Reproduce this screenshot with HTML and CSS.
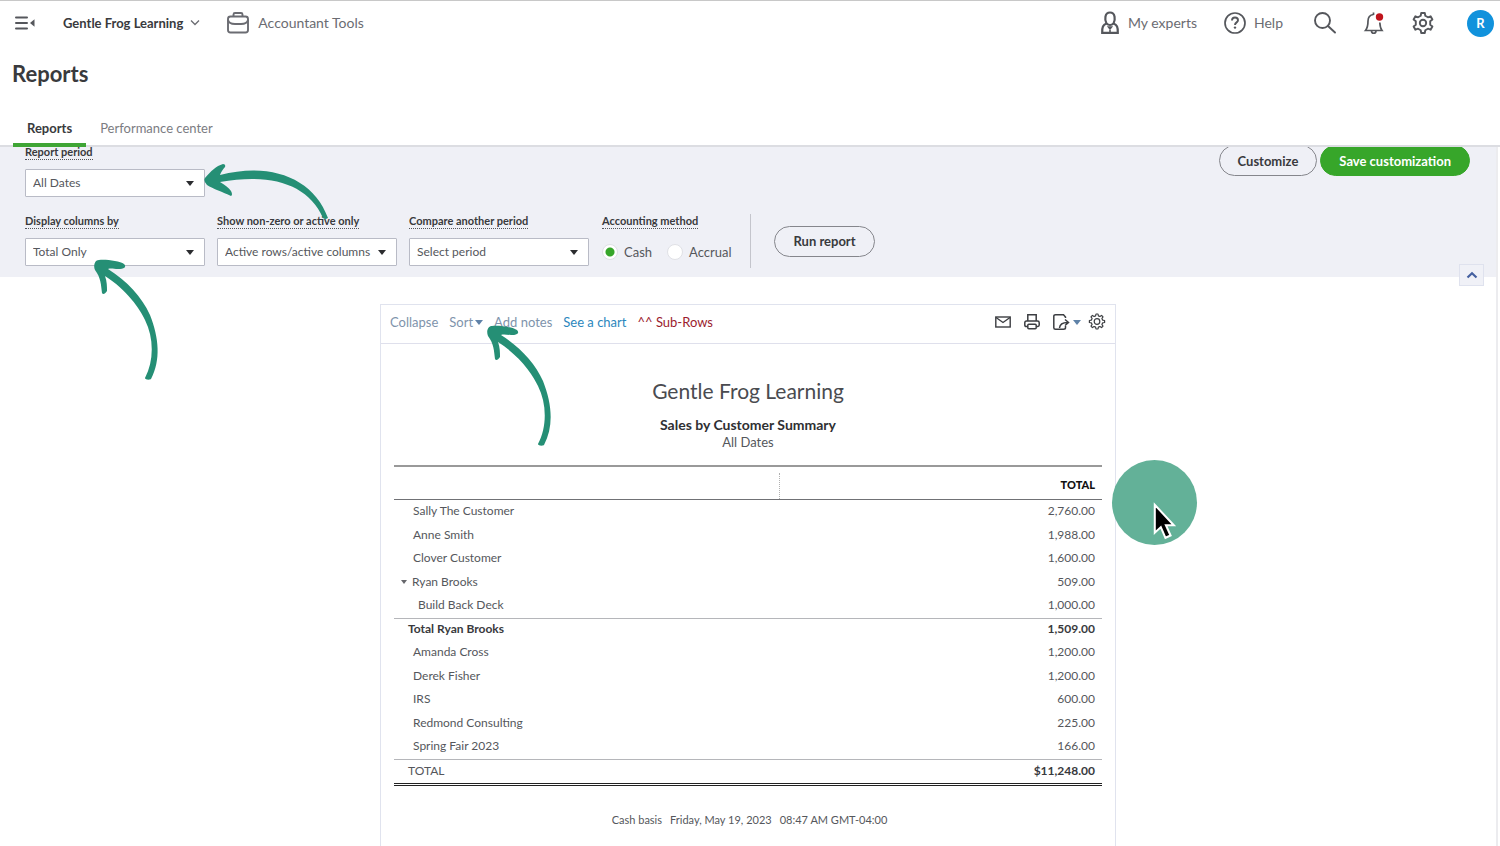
FILE: index.html
```html
<!DOCTYPE html>
<html lang="en">
<head>
<meta charset="utf-8">
<title>Reports</title>
<link rel="stylesheet" href="styles.css">
</head>
<body>
<div class="page">
  <header class="topbar">
    <button class="icon-btn menu-btn" type="button" aria-label="Toggle menu">
      <svg width="22" height="16" viewBox="0 0 22 16"><path d="M1 2.500h11M1 8h11M1 13.500h11" stroke="#55575c" stroke-width="2" stroke-linecap="round"/><path d="M19.500 4.200v7.600L15 8z" fill="#55575c"/></svg>
    </button>
    <button class="company-btn" type="button">Gentle Frog Learning
      <svg width="10" height="8" viewBox="0 0 10 8"><path d="M1 1.500l4 4 4-4" fill="none" stroke="#6b6c72" stroke-width="1.300"/></svg>
    </button>
    <a class="top-link tools" href="#">
      <svg width="24" height="24" viewBox="0 0 24 24" fill="none" stroke="#6b6c72" stroke-width="1.900"><rect x="2" y="5.500" width="20" height="16" rx="2.500"/><path d="M7.500 5.500V3.500q0-1.500 1.500-1.500h6q1.500 0 1.500 1.500v2M2 9q1 4 7 4h6q6 0 7-4"/></svg>
      Accountant Tools
    </a>
    <nav class="top-right">
      <a class="top-link experts" href="#">
        <svg width="20" height="24" viewBox="0 0 20 24" fill="none" stroke="#55575c" stroke-width="2.200"><path d="M6.500 12.500C4.500 9 4.500 1.500 10 1.500s5.500 7.500 3.500 11c-2 2-5 2-7 0zM6.500 12.500C3 14 2 16 2.200 21.800h15.600C18 16 17 14 13.500 12.500"/><path d="M8.500 16h3l-1.500 2zM10 17v4" stroke-width="1.600"/></svg>
        My experts
      </a>
      <a class="top-link" href="#">
        <svg width="22" height="22" viewBox="0 0 22 22" fill="none" stroke="#55575c" stroke-width="1.700"><circle cx="11" cy="11" r="10"/><path d="M8 8.500q0-3 3-3t3 2.800c0 2.200-3 2-3 4.700" stroke-width="1.900"/><circle cx="11" cy="15.600" r="1.200" fill="#55575c" stroke="none"/></svg>
        Help
      </a>
      <button class="icon-btn search" type="button" aria-label="Search">
        <svg width="24" height="24" viewBox="0 0 24 24" fill="none" stroke="#55575c" stroke-width="1.900"><circle cx="9.500" cy="9.500" r="7.500"/><path d="M15 15l7 6.500" stroke-linecap="round"/></svg>
      </button>
      <button class="icon-btn" type="button" aria-label="Notifications">
        <svg width="24" height="24" viewBox="0 0 24 24" fill="none" stroke="#55575c" stroke-width="1.700"><path d="M11.500 3.500C7.500 4 6 6.500 6 10c0 5-.5 7-2.500 9.500h16.500C18.500 17.500 18 15.500 17.800 11.500M11.500 4V1.500M9.500 20c0 3 4.500 3 4.500 0"/><circle cx="17.500" cy="6" r="3.700" fill="#c0141c" stroke="none"/></svg>
      </button>
      <button class="icon-btn" type="button" aria-label="Settings">
        <svg width="24" height="24" viewBox="0 0 24 24" fill="none" stroke="#55575c" stroke-width="1.900" stroke-linejoin="round"><path d="M9.700 4.800L10.200 2h3.600l.5 2.800 2.600 1.500 2.700-1 1.800 3.200-2.200 1.800v3.400l2.200 1.800-1.800 3.200-2.700-1-2.600 1.500-.5 2.800h-3.600l-.5-2.800-2.600-1.500-2.700 1-1.800-3.200 2.200-1.800v-3.400L2.600 8.500l1.800-3.200 2.700 1z"/><circle cx="12" cy="12" r="3.200"/></svg>
      </button>
      <button class="avatar" type="button" aria-label="Account">R</button>
    </nav>
  </header>

  <div class="heading">
    <h1>Reports</h1>
    <nav class="tabs">
      <a class="tab active" href="#">Reports</a>
      <a class="tab" href="#">Performance center</a>
    </nav>
  </div>

  <main class="content">
    <form class="filters">
      <div class="filter-row first">
        <div class="field">
          <label for="period">Report period</label>
          <div class="select"><select id="period"><option>All Dates</option></select></div>
          <svg class="arrow arrow-period" width="126" height="60" viewBox="0 0 126 60" fill="#258f75"><path d="M2 16C8 9 13 4 20 2q3 0 2 3c-2 2-4 5-5 8C66 0 110 15 125 56q-3 2-5 0C105 21 66 11 17 20c5 3 9 6 11 9q2 4 0 5C20 30 10 27 4 23q-4-4-2-7z"/></svg>
        </div>
        <div class="actions">
          <button class="pill" type="button">Customize</button>
          <button class="pill primary" type="button">Save customization</button>
        </div>
      </div>
      <div class="filter-row">
        <div class="field">
          <label for="columns">Display columns by</label>
          <div class="select"><select id="columns"><option>Total Only</option></select></div>
          <svg class="arrow arrow-columns" width="68" height="124" viewBox="0 0 68 124" fill="#258f75"><path d="M6 2C12 1 27 3 31 6c3 3 0 5-6 5-4 0-7-1-10 0C34 23 49 39 57 57 66 80 68 102 58 121c-1 1-6 1-6-1C61 103 61 80 52 62 47 51 34 32 12 18c2 5 2 11 2 15-2 3-4 4-5 2C8 27 8 20 2 12 0 7 2 2 6 2z"/></svg>
        </div>
        <div class="field">
          <label for="active">Show non-zero or active only</label>
          <div class="select"><select id="active"><option>Active rows/active columns</option></select></div>
        </div>
        <div class="field">
          <label for="compare">Compare another period</label>
          <div class="select"><select id="compare"><option>Select period</option></select></div>
        </div>
        <fieldset class="method">
          <legend>Accounting method</legend>
          <div class="radios">
            <label><input type="radio" name="method" checked>Cash</label>
            <label><input type="radio" name="method">Accrual</label>
          </div>
        </fieldset>
        <div class="run"><button class="pill" type="button">Run report</button></div>
      </div>
      <button class="fold" type="button" aria-label="Hide filters">
        <svg width="12" height="8" viewBox="0 0 12 8"><path d="M1.500 6.500L6 2.200l4.500 4.300" fill="none" stroke="#4560a0" stroke-width="2.200"/></svg>
      </button>
    </form>

    <section class="report">
      <div class="toolbar">
        <a href="#">Collapse</a>
        <a class="sort" href="#">Sort</a>
        <a href="#">Add notes</a>
        <a class="chart" href="#">See a chart</a>
        <a class="subrows" href="#">^^ Sub-Rows</a>
        <div class="tools-right">
          <button class="icon-btn" type="button" aria-label="Email">
            <svg width="16" height="20" viewBox="0 0 16 20" fill="none" stroke="#3c3e42" stroke-width="1.400"><rect x=".8" y="5" width="14.400" height="10"/><path d="M1 5.500l7 5 7-5"/></svg>
          </button>
          <button class="icon-btn" type="button" aria-label="Print">
            <svg width="16" height="20" viewBox="0 0 16 20" fill="none" stroke="#3c3e42" stroke-width="1.500"><path d="M3.800 9V2.700h8.400V9M3.500 14.500H2.200q-1.400 0-1.400-1.400v-2.400Q.8 9 2.500 9h11q1.700 0 1.700 1.700v2.400q0 1.400-1.400 1.400h-1.300"/><rect x="3.800" y="12.200" width="8.400" height="4.600" rx="1"/></svg>
          </button>
          <button class="icon-btn export" type="button" aria-label="Export">
            <svg width="18" height="20" viewBox="0 0 18 20" fill="none" stroke="#3c3e42" stroke-width="1.500"><path d="M12.500 6V5L10.500 2.700H2.500q-1.700 0-1.700 1.500v11.600q0 1.500 1.700 1.500h8q2 0 2-1.500V14M6.500 16q.5-5.500 8-5.500M12 7.500l3.500 3-3.500 3"/></svg>
          </button>
          <button class="icon-btn" type="button" aria-label="Report settings">
            <svg width="18" height="20" viewBox="0 0 18 20" fill="none" stroke="#3c3e42" stroke-width="1.200" stroke-linejoin="round"><path d="M7.600 3.900L8 2h2l.4 1.900 1.500.6 1.700-1.100L15 4.800l-1.100 1.700.7 1.600 2 .4v2l-2 .4-.7 1.600 1.100 1.700-1.400 1.400-1.700-1.100-1.500.6L10 17H8l-.4-1.900-1.500-.6-1.700 1.100L3 14.200l1.100-1.700-.7-1.600-2-.4v-2l2-.4.7-1.600L3 4.800l1.400-1.400 1.700 1.100z"/><circle cx="9" cy="9.500" r="2.800"/></svg>
          </button>
        </div>
        <svg class="arrow arrow-sort" width="68" height="124" viewBox="0 0 68 124" fill="#258f75"><path d="M6 2C12 1 27 3 31 6c3 3 0 5-6 5-4 0-7-1-10 0C34 23 49 39 57 57 66 80 68 102 58 121c-1 1-6 1-6-1C61 103 61 80 52 62 47 51 34 32 12 18c2 5 2 11 2 15-2 3-4 4-5 2C8 27 8 20 2 12 0 7 2 2 6 2z"/></svg>
      </div>
      <div class="sheet">
        <h2>Gentle Frog Learning</h2>
        <h3>Sales by Customer Summary</h3>
        <p class="range">All Dates</p>
        <table>
          <thead><tr><th class="name-col"></th><th>TOTAL</th></tr></thead>
          <tbody>
            <tr><td>Sally The Customer</td><td>2,760.00</td></tr>
            <tr><td>Anne Smith</td><td>1,988.00</td></tr>
            <tr><td>Clover Customer</td><td>1,600.00</td></tr>
            <tr class="parent"><td>Ryan Brooks</td><td>509.00</td></tr>
            <tr class="child"><td>Build Back Deck</td><td>1,000.00</td></tr>
            <tr class="subtotal"><td>Total Ryan Brooks</td><td>1,509.00</td></tr>
            <tr><td>Amanda Cross</td><td>1,200.00</td></tr>
            <tr><td>Derek Fisher</td><td>1,200.00</td></tr>
            <tr><td>IRS</td><td>600.00</td></tr>
            <tr><td>Redmond Consulting</td><td>225.00</td></tr>
            <tr><td>Spring Fair 2023</td><td>166.00</td></tr>
          </tbody>
          <tfoot><tr class="total"><td>TOTAL</td><td>$11,248.00</td></tr></tfoot>
        </table>
        <p class="basis"><span>Cash basis</span><span>Friday, May 19, 2023</span><span>08:47 AM GMT-04:00</span></p>
      </div>
      <div class="pointer">
        <svg width="26" height="40" viewBox="0 0 28 43"><path d="M3 3v30l6.500-6 5 11.500 5.500-2.500-5-11h8.500z" fill="#000" stroke="#fff" stroke-width="2.200"/></svg>
      </div>
    </section>
  </main>
</div>
</body>
</html>
```

FILE: styles.css
```css
* { box-sizing: border-box; }

body {
  margin: 0;
  background: #fff;
  color: #55575c;
  font: 13px/18px Lato, "Open Sans", sans-serif;
}

h1, h2, h3, p, fieldset, legend { margin: 0; padding: 0; border: 0; }
a { color: inherit; text-decoration: none; }
button, select { font: inherit; color: inherit; }
svg { display: block; flex: none; }

.page {
  min-height: 100vh;
  display: flex;
  flex-direction: column;
  border-top: 1px solid #c8c8c8;
}

.icon-btn { padding: 0; border: 0; background: none; }

/* Top bar */
.topbar {
  height: 44px;
  display: flex;
  align-items: center;
  padding: 0 6px 0 15px;
}
.company-btn {
  display: flex;
  align-items: center;
  gap: 7px;
  margin-left: 26px;
  padding: 0;
  border: 0;
  background: none;
  color: #393a3d;
  font-weight: 700;
}
.top-link {
  display: flex;
  align-items: center;
  gap: 8px;
  color: #6b6c72;
  font-size: 14px;
}
.tools { margin-left: 26px; }
.top-right {
  display: flex;
  align-items: center;
  gap: 25px;
  margin-left: auto;
}
.experts { margin-right: 2px; }
.search { margin-left: 5px; }
.avatar {
  width: 27px;
  height: 27px;
  margin-left: 7px;
  padding: 0;
  border: 0;
  border-radius: 50%;
  background: #1192dc;
  color: #fff;
  font-weight: 700;
}

/* Heading and tabs */
.heading {
  position: relative;
  z-index: 1;
  background: #fff;
  border-bottom: 2px solid #dcdde2;
}
h1 {
  padding: 15px 12px 0;
  color: #393a3d;
  font-size: 22px;
  line-height: 28px;
}
.tabs {
  display: flex;
  gap: 14px;
  padding: 31px 13px 0;
  margin-bottom: -2px;
}
.tab {
  padding: 0 0 6px;
  border-bottom: 4px solid transparent;
  color: #7b7c82;
}
.tab.active {
  padding: 0 14px 6px;
  border-radius: 2px 2px 0 0;
  border-color: #3fa535;
  color: #393a3d;
  font-weight: 700;
}

/* Filters */
.content {
  flex: 1;
  display: flex;
  flex-direction: column;
  margin-right: 2px;
  border-right: 2px solid #ececef;
}
.filters {
  position: relative;
  padding: 0 26px 11px 25px;
  background: #eff0f6;
}
.filter-row { display: flex; gap: 12px; margin-top: 17px; }
.filter-row.first { margin-top: -2px; justify-content: space-between; }
.field { position: relative; width: 180px; }
.field > label, legend {
  display: block;
  width: max-content;
  color: #393a3d;
  font-size: 11px;
  font-weight: 700;
  line-height: 14px;
  border-bottom: 1px dotted #55575c;
}
.select { position: relative; margin-top: 9px; }
.select::after {
  content: "";
  position: absolute;
  right: 11px;
  top: 12px;
  border: 4px solid transparent;
  border-top: 5px solid #2b2c2f;
  border-bottom: 0;
  pointer-events: none;
}
.select select {
  display: block;
  width: 100%;
  height: 28px;
  padding: 0 22px 0 7px;
  border: 1px solid #b9bbc6;
  border-radius: 1px;
  background: #fff;
  font-size: 12px;
  appearance: none;
}
.actions { display: flex; align-items: flex-start; gap: 3px; }
.pill {
  height: 31px;
  padding: 0 18px;
  border: 1px solid #85868c;
  border-radius: 16px;
  background: transparent;
  color: #393a3d;
  font-weight: 700;
}
.pill.primary { background: #37a62a; border-color: #37a62a; color: #fff; }
.radios { display: flex; gap: 15px; margin-top: 14px; }
.radios label { display: flex; align-items: center; gap: 6px; }
.radios input {
  width: 16px;
  height: 16px;
  margin: 0;
  border: 1px solid #e0e1e6;
  border-radius: 50%;
  background: #fff;
  appearance: none;
}
.radios input:checked { background: radial-gradient(circle, #37a62a 4px, #fff 5px); }
.method { margin-left: 1px; }
.run {
  height: 54px;
  display: flex;
  align-items: center;
  margin: 0 0 -3px 7px;
  padding-left: 23px;
  border-left: 1px solid #c4c5cc;
}
.fold {
  position: absolute;
  right: 12px;
  bottom: -9px;
  display: grid;
  place-items: center;
  width: 25px;
  height: 22px;
  padding: 0;
  border: 1px solid #dfe2ee;
  background: #f0f1f7;
}

/* Hand-drawn pointers */
.arrow { position: absolute; z-index: 2; pointer-events: none; }
.arrow-period { left: 178px; top: 17px; }
.arrow-columns { left: 68px; top: 44px; }
.arrow-sort { left: 105px; top: 19px; }

/* Report */
.report {
  position: relative;
  flex: 1;
  width: 736px;
  max-width: 100%;
  margin: 27px auto 0;
  border: 1px solid #e0e3ee;
  border-bottom: 0;
}
.toolbar {
  position: relative;
  display: flex;
  align-items: center;
  gap: 11px;
  height: 39px;
  padding: 0 9px 4px 9px;
  border-bottom: 1px solid #dfe0ec;
  color: #7e93ab;
}
.sort { display: flex; align-items: center; gap: 2px; }
.sort::after, .export::after {
  content: "";
  border: 4px solid transparent;
  border-top: 5px solid #5f82a8;
  border-bottom: 0;
}
.chart { color: #2b87bd; }
.subrows { color: #9b1c2e; }
.tools-right { display: flex; align-items: center; gap: 13px; margin-left: auto; }
.export { display: flex; align-items: center; gap: 2px; margin-right: -6px; }
.sheet { padding: 33px 13px 18px; text-align: center; }
h2 { color: #4a4b50; font-size: 21px; font-weight: 400; line-height: 28px; }
h3 { margin-top: 11px; color: #2f3033; font-size: 14px; line-height: 18px; }
.range { line-height: 16px; }

table {
  width: 100%;
  margin-top: 15px;
  border-collapse: separate;
  border-spacing: 0;
  font-size: 12px;
  line-height: 16px;
}
th {
  position: relative;
  height: 35px;
  padding: 3px 7px 0;
  border-top: 2px solid #999;
  border-bottom: 1px solid #707175;
  color: #111;
  font-size: 11px;
  font-weight: 900;
  text-align: right;
}
.name-col { width: 386px; }
.name-col::after {
  content: "";
  position: absolute;
  right: 0;
  top: 6px;
  bottom: 0;
  border-right: 1px dotted #b0b0b0;
}
td { height: 24px; padding: 0 7px 2px 19px; text-align: right; }
tr:nth-child(even) td { height: 23px; }
td:first-child { text-align: left; }
.parent td:first-child::before {
  content: "";
  display: inline-block;
  margin: 0 5px 2px -12px;
  border: 3px solid transparent;
  border-top: 4px solid #66676c;
  border-bottom: 0;
}
.child td:first-child { padding-left: 24px; }
.subtotal td, .total td { border-top: 1px solid #b5b6ba; }
.subtotal td:first-child, .total td:first-child { padding-left: 14px; }
.subtotal td, .total td:last-child { color: #393a3d; font-weight: 700; }
.total td { height: 27px; border-bottom: 3px double #222; }
.basis { display: flex; justify-content: center; gap: 8px; margin-top: 25px; padding-left: 3px; font-size: 11px; }

.pointer {
  position: absolute;
  left: 731px;
  top: 155px;
  width: 85px;
  height: 85px;
  padding: 42px 0 0 40px;
  border-radius: 50%;
  background: #63b198;
}
```
